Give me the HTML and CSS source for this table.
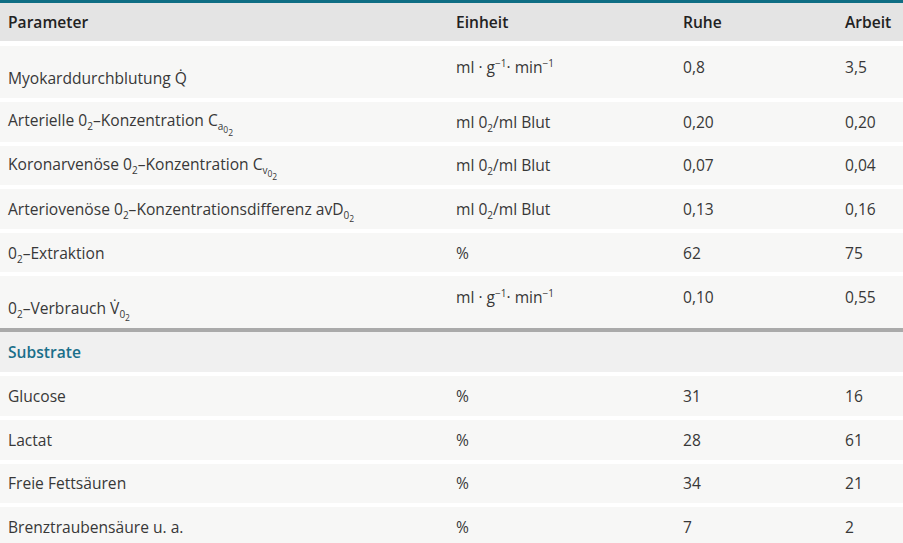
FILE: index.html
```html
<!DOCTYPE html>
<html lang="de">
<head>
<meta charset="utf-8">
<link rel="stylesheet" href="styles.css">
</head>
<body>
<table class="tbl">
  <colgroup>
    <col class="c1"><col class="c2"><col class="c3"><col class="c4">
  </colgroup>
  <thead>
    <tr class="head">
      <th>Parameter</th><th>Einheit</th><th>Ruhe</th><th>Arbeit</th>
    </tr>
  </thead>
  <tbody>
    <tr class="row tall">
      <td class="low">Myokarddurchblutung Q&#775;</td>
      <td>ml · g<sup>−1</sup>· min<sup>−1</sup></td>
      <td>0,8</td><td>3,5</td>
    </tr>
    <tr class="row">
      <td>Arterielle 0<sub>2</sub>–Konzentration C<sub>a<sub>0<sub>2</sub></sub></sub></td>
      <td>ml 0<sub>2</sub>/ml Blut</td>
      <td>0,20</td><td>0,20</td>
    </tr>
    <tr class="row">
      <td>Koronarvenöse 0<sub>2</sub>–Konzentration C<sub>v<sub>0<sub>2</sub></sub></sub></td>
      <td>ml 0<sub>2</sub>/ml Blut</td>
      <td>0,07</td><td>0,04</td>
    </tr>
    <tr class="row">
      <td>Arteriovenöse 0<sub>2</sub>–Konzentrationsdifferenz avD<sub>0<sub>2</sub></sub></td>
      <td>ml 0<sub>2</sub>/ml Blut</td>
      <td>0,13</td><td>0,16</td>
    </tr>
    <tr class="row">
      <td>0<sub>2</sub>–Extraktion</td>
      <td>%</td>
      <td>62</td><td>75</td>
    </tr>
    <tr class="row tall last">
      <td class="low">0<sub>2</sub>–Verbrauch V&#775;<sub>0<sub>2</sub></sub></td>
      <td>ml · g<sup>−1</sup>· min<sup>−1</sup></td>
      <td>0,10</td><td>0,55</td>
    </tr>
    <tr class="section">
      <td colspan="4">Substrate</td>
    </tr>
    <tr class="row">
      <td>Glucose</td><td>%</td><td>31</td><td>16</td>
    </tr>
    <tr class="row">
      <td>Lactat</td><td>%</td><td>28</td><td>61</td>
    </tr>
    <tr class="row">
      <td>Freie Fettsäuren</td><td>%</td><td>34</td><td>21</td>
    </tr>
    <tr class="row">
      <td>Brenztraubensäure u. a.</td><td>%</td><td>7</td><td>2</td>
    </tr>
  </tbody>
</table>
</body>
</html>
```

FILE: styles.css
```css
html, body {
  margin: 0;
  padding: 0;
  background: #ffffff;
}
body {
  font-family: "Open Sans", "Noto Sans", sans-serif;
  font-size: 15.6px;
  color: #383838;
}
.tbl {
  width: 903px;
  border-collapse: separate;
  border-spacing: 0;
  table-layout: fixed;
  border-top: 3px solid #0f6e84;
}
.c1 { width: 448px; }
.c2 { width: 227px; }
.c3 { width: 162px; }
.c4 { width: 66px; }

th, td {
  box-sizing: border-box;
  padding: 0 0 0 8px;
  text-align: left;
  white-space: nowrap;
  line-height: 20px;
}
.head th {
  height: 43px;
  background: #e4e4e4;
  color: #222222;
  font-weight: 600;
  border-bottom: 5px solid #ffffff;
  vertical-align: middle;
}
.row td {
  height: 43.6px;
  background: #f7f7f6;
  border-bottom: 4px solid #ffffff;
  vertical-align: middle;
}
.row.tall td {
  height: 56px;
  vertical-align: top;
  padding-top: 11px;
}
.row.tall td.low {
  vertical-align: bottom;
  padding-top: 0;
  padding-bottom: 10px;
}
.row.last td {
  height: 56px;
  border-bottom: 4px solid #aaaaaa;
}
.section td {
  height: 44px;
  background: #f0f0f0;
  color: #1b6f8a;
  font-weight: 600;
  border-bottom: 4px solid #ffffff;
  vertical-align: middle;
}
sub {
  font-size: 10px;
  vertical-align: -4px;
  line-height: 0;
}
sub sub {
  font-size: 8.5px;
  vertical-align: -3px;
}
sup {
  font-size: 10px;
  vertical-align: 6px;
  line-height: 0;
}
```
